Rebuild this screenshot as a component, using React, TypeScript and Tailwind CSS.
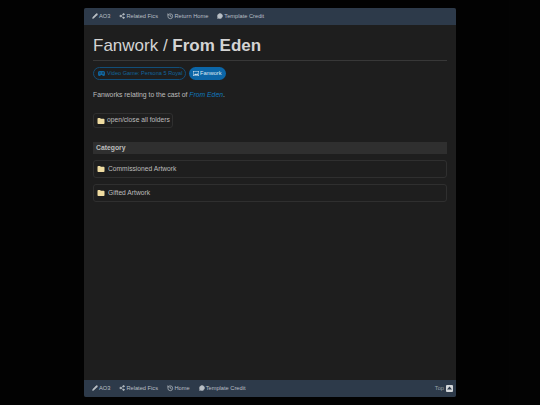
import { Pencil, Share2, History, MessageCircle } from "lucide-react";

const FolderIcon = () => (
  <svg width={8} height={8} viewBox="0 0 16 16" className="shrink-0">
    <path d="M1 3.500C1 2.700 1.700 2 2.500 2h3.600l1.600 1.700h5.800c.8 0 1.500.7 1.500 1.500v7.300c0 .8-.7 1.500-1.500 1.500h-11C1.700 14 1 13.300 1 12.500z" fill="#efdca0" />
  </svg>
);

const items = (home: string) => [
  { icon: <Pencil size={6} fill="currentColor" strokeWidth={2} />, label: "AO3" },
  { icon: <Share2 size={6} fill="currentColor" strokeWidth={2.5} />, label: "Related Fics" },
  { icon: <History size={6.5} strokeWidth={2.5} />, label: home },
  { icon: <MessageCircle size={6} fill="currentColor" />, label: "Template Credit" },
];

const Nav = ({ home, top }: { home: string; top?: boolean }) => (
  <div className={`flex h-[17px] items-center justify-between bg-[#2b3848] pl-2 pr-[3px] text-[5.7px] text-[#b9bfc5] ${top ? "rounded-t-[2px]" : "rounded-b-[2px]"}`}>
    <div className="flex items-center gap-[9px]">
      {items(home).map((it) => (
        <span key={it.label} className="flex items-center gap-[1px]">
          {it.icon}
          {it.label}
        </span>
      ))}
    </div>
    {!top && (
      <span className="flex items-center gap-[2px] text-[#9aa2aa]">
        Top
        <span className="flex h-[7px] w-[7px] items-center justify-center rounded-[1px] bg-[#d5d8db]">
          <svg width="5" height="4" viewBox="0 0 5 4"><path d="M2.500 0.500L5 3.500H0z" fill="#2b3848" /></svg>
        </span>
      </span>
    )}
  </div>
);

export default function App() {
  return (
    <div className="h-[405px] bg-black py-2 font-['Liberation_Sans',sans-serif] opacity-[0.99]">
      <div className="mx-auto flex h-[389px] w-[372px] flex-col rounded-[2px] bg-[#1c1c1c]">
        <Nav home="Return Home" top />
        <main className="flex-1 px-[9px] text-[#bdbdbd]">
          <h1 className="mt-[10px] border-b border-[#363636] pb-[3px] text-[17px] leading-[22px] text-[#d4d4d4]">
            Fanwork / <b>From Eden</b>
          </h1>
          <div className="mt-[6px] flex gap-[3px] text-[5.6px] leading-none">
            <span className="flex h-[13px] w-[93px] items-center gap-[2px] rounded-full border border-[#0f4c78] pl-[4px] text-[#0f639c]">
              <svg width="7" height="5" viewBox="0 0 14 10" className="shrink-0">
                <path fillRule="evenodd" d="M3 0h8a3 3 0 0 1 3 3v4a3 3 0 0 1-3 3h-1L8 8H6l-2 2H3a3 3 0 0 1-3-3V3a3 3 0 0 1 3-3zm0 3v2h2V3zm7-.500a1.500 1.500 0 1 0 0 3 1.500 1.500 0 0 0 0-3z" fill="currentColor" />
              </svg>
              Video Game: Persona 5 Royal
            </span>
            <span className="flex h-[13px] w-[37px] items-center gap-[1px] rounded-full bg-[#0a65a6] pl-[4px] text-[#dfe9f2]">
              <svg width="6" height="5" viewBox="0 0 12 10" className="shrink-0">
                <rect x="0.500" y="0.500" width="11" height="9" fill="none" stroke="currentColor" />
                <path d="M2 8l2.500-3 2 2 2-3L10 8z" fill="currentColor" />
              </svg>
              Fanwork
            </span>
          </div>
          <p className="mt-[10px] text-[6.8px] leading-[10px]">
            Fanworks relating to the cast of <i className="text-[#0f78be]">From Eden</i>.
          </p>
          <button className="mt-[13px] flex h-[15px] w-[80px] items-center gap-[2px] whitespace-nowrap rounded-[3px] border border-[#2d2d2d] px-[3px] text-[6.7px]">
            <FolderIcon />
            open/close all folders
          </button>
          <div className="mt-[14px] flex h-[12px] items-center bg-[#2d2d2d] px-[3px] text-[6.8px] font-bold">Category</div>
          <div className="mt-[6px] flex flex-col gap-[6px]">
            {["Commissioned Artwork", "Gifted Artwork"].map((t) => (
              <div key={t} className="flex h-[18px] items-center gap-[3px] rounded-[3px] border border-[#2d2d2d] px-[3px] text-[6.7px]">
                <FolderIcon />
                {t}
              </div>
            ))}
          </div>
        </main>
        <Nav home="Home" />
      </div>
    </div>
  );
}
